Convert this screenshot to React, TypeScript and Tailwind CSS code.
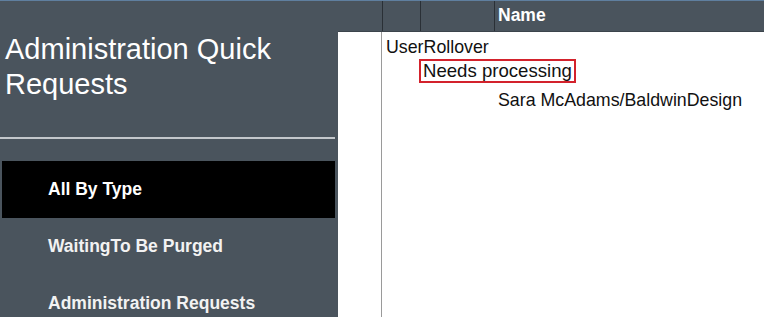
import React from "react";

const navItems = [
  { label: "All By Type", active: true },
  { label: "WaitingTo Be Purged", active: false },
  { label: "Administration Requests", active: false },
];

export default function App() {
  return (
    <div
      className="relative flex h-[317px] w-[764px] overflow-hidden bg-[#4a545d]"
      style={{ fontFamily: '"Liberation Sans", Arial, sans-serif' }}
    >
      <div className="absolute left-0 top-0 h-[1px] w-full bg-[#5f7f9f]" />

      {/* sidebar */}
      <aside className="flex w-[338px] shrink-0 flex-col">
        <h1 className="shrink-0 pl-[5px] pt-[32px] text-[29px] font-normal leading-[35px] text-white">
          Administration Quick
          <br />
          Requests
        </h1>
        <div className="mt-[35px] h-[2px] w-[335px] shrink-0 bg-[#c3c7cb]" />
        <nav className="mt-[22px] flex shrink-0 flex-col">
          {navItems.map((item) => (
            <div
              key={item.label}
              className={
                item.active
                  ? "ml-[2px] flex h-[57px] w-[333px] shrink-0 items-center bg-black pl-[46px] text-[17.5px] font-bold text-white"
                  : "ml-[2px] flex h-[57px] w-[333px] shrink-0 items-center pl-[46px] text-[17.5px] font-bold text-[#f2f2f2]"
              }
            >
              {item.label}
            </div>
          ))}
        </nav>
      </aside>

      {/* main view */}
      <main className="flex flex-1 flex-col">
        <div className="flex h-[32px] shrink-0 border-b border-[#3c444c]">
          <div className="w-[45px] border-r border-[#2a3036]" />
          <div className="w-[38px] border-r border-[#2a3036]" />
          <div className="w-[74px] border-r border-[#2a3036]" />
          <div className="flex items-center pl-[3px] text-[17.5px] font-bold text-white">Name</div>
        </div>
        <div className="flex flex-1 bg-white">
          <div className="w-[44px] border-r border-[#9a9a9a]" />
          <div className="flex flex-1 flex-col pt-[3px] text-[17.8px] text-[#111]">
            <div className="pl-[4px] leading-[24px]">UserRollover</div>
            <div className="ml-[37px] self-start border-2 border-[#d3222c] px-[2px] text-[18.6px] leading-[20px]">
              Needs processing
            </div>
            <div className="pl-[116px] pt-[5px] leading-[24px]">Sara McAdams/BaldwinDesign</div>
          </div>
        </div>
      </main>
    </div>
  );
}
